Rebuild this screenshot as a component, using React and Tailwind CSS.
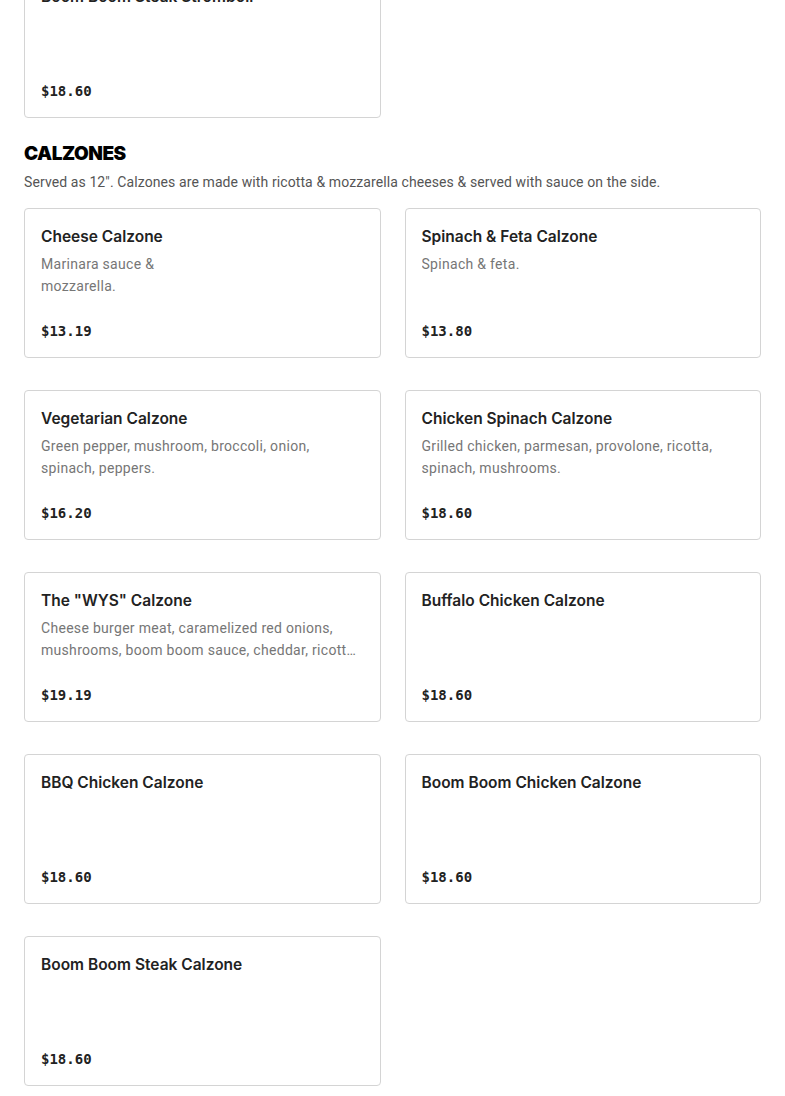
import React from "react";

const calzones = [
  { name: "Cheese Calzone", desc: ["Marinara sauce &", "mozzarella."], price: "$13.19" },
  { name: "Spinach & Feta Calzone", desc: "Spinach & feta.", price: "$13.80" },
  { name: "Vegetarian Calzone", desc: "Green pepper, mushroom, broccoli, onion, spinach, peppers.", price: "$16.20" },
  { name: "Chicken Spinach Calzone", desc: "Grilled chicken, parmesan, provolone, ricotta, spinach, mushrooms.", price: "$18.60" },
  { name: 'The "WYS" Calzone', desc: "Cheese burger meat, caramelized red onions, mushrooms, boom boom sauce, cheddar, ricotta, mozzarella.", price: "$19.19" },
  { name: "Buffalo Chicken Calzone", desc: "", price: "$18.60" },
  { name: "BBQ Chicken Calzone", desc: "", price: "$18.60" },
  { name: "Boom Boom Chicken Calzone", desc: "", price: "$18.60" },
  { name: "Boom Boom Steak Calzone", desc: "", price: "$18.60" },
];

function ItemCard({ item }) {
  return (
    <div className="h-[150px] border border-[#d4d4d4] rounded-[4px] bg-white px-4 pt-4 pb-4 flex flex-col justify-between">
      <div>
        <div className="text-[15.5px] leading-6 font-semibold text-[#222] font-['Inter',sans-serif]">{item.name}</div>
        {item.desc && (
          <div className="mt-1 text-[14px] leading-[22px] text-[#767676] line-clamp-2 font-['Roboto',sans-serif] tracking-[0.3px]">
            {Array.isArray(item.desc) ? (
              <>
                {item.desc[0]}
                <br />
                {item.desc[1]}
              </>
            ) : (
              item.desc
            )}
          </div>
        )}
      </div>
      <div className="text-[14px] leading-5 font-bold text-[#222] font-['DejaVu_Sans_Mono',monospace]">
        {item.price}
      </div>
    </div>
  );
}

export default function App() {
  return (
    <div className="bg-white min-h-screen font-['Inter',sans-serif] px-6">
      <div className="-mt-[32px] grid grid-cols-2 gap-6">
        <ItemCard item={{ name: "Boom Boom Steak Stromboli", desc: "", price: "$18.60" }} />
      </div>

      <div className="mt-[22px]">
        <h2 className="text-[19px] leading-7 font-black text-black tracking-tight">CALZONES</h2>
        <p className="text-[14px] leading-7 text-[#555] font-['Roboto',sans-serif] tracking-[0.1px]">
          Served as 12". Calzones are made with ricotta &amp; mozzarella cheeses &amp; served with sauce on the side.
        </p>
      </div>

      <div className="mt-[12px] grid grid-cols-2 gap-x-6 gap-y-8 pb-10">
        {calzones.map((item) => (
          <ItemCard key={item.name} item={item} />
        ))}
      </div>
    </div>
  );
}
